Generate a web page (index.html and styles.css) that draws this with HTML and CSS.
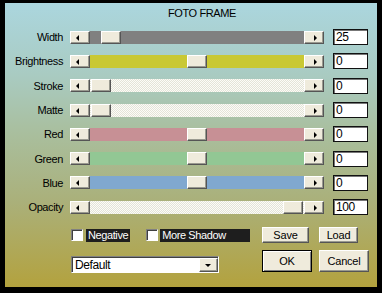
FILE: index.html
```html
<!DOCTYPE html>
<html lang="en">
<head>
    <meta charset="UTF-8">
    <title>Foto Frame</title>
    <link rel="stylesheet" href="styles.css">
</head>
<body>
    <div class="dialog">
        <div class="title">FOTO FRAME</div>

        <div class="sliders">
            <div class="name">Width</div>
            <div class="slider">
                <span class="arrow left"></span>
                <span class="track grey"><span class="thumb" style="left: 11px"></span></span>
                <span class="arrow right"></span>
            </div>
            <div class="value">25</div>

            <div class="name">Brightness</div>
            <div class="slider">
                <span class="arrow left"></span>
                <span class="track yellow"><span class="thumb" style="left: 97px"></span></span>
                <span class="arrow right"></span>
            </div>
            <div class="value">0</div>

            <div class="name">Stroke</div>
            <div class="slider">
                <span class="arrow left"></span>
                <span class="track dither"><span class="thumb" style="left: 1px"></span></span>
                <span class="arrow right"></span>
            </div>
            <div class="value">0</div>

            <div class="name">Matte</div>
            <div class="slider">
                <span class="arrow left"></span>
                <span class="track dither"><span class="thumb" style="left: 1px"></span></span>
                <span class="arrow right"></span>
            </div>
            <div class="value">0</div>

            <div class="name">Red</div>
            <div class="slider">
                <span class="arrow left"></span>
                <span class="track red"><span class="thumb" style="left: 97px"></span></span>
                <span class="arrow right"></span>
            </div>
            <div class="value">0</div>

            <div class="name">Green</div>
            <div class="slider">
                <span class="arrow left"></span>
                <span class="track green"><span class="thumb" style="left: 97px"></span></span>
                <span class="arrow right"></span>
            </div>
            <div class="value">0</div>

            <div class="name">Blue</div>
            <div class="slider">
                <span class="arrow left"></span>
                <span class="track blue"><span class="thumb" style="left: 97px"></span></span>
                <span class="arrow right"></span>
            </div>
            <div class="value">0</div>

            <div class="name">Opacity</div>
            <div class="slider">
                <span class="arrow left"></span>
                <span class="track dither"><span class="thumb" style="left: 193px"></span></span>
                <span class="arrow right"></span>
            </div>
            <div class="value">100</div>
        </div>

        <div class="bottom">
            <div class="checks">
                <span class="box"></span>
                <span class="check-label">Negative</span>
                <span class="box second"></span>
                <span class="check-label wide">More Shadow</span>
            </div>
            <button class="btn save">Save</button>
            <button class="btn load">Load</button>

            <div class="select">
                <span class="select-text">Default</span>
                <span class="select-btn"></span>
            </div>
            <button class="btn big default">OK</button>
            <button class="btn big">Cancel</button>
        </div>
    </div>
</body>
</html>
```

FILE: styles.css
```css
body {
    margin: 0;
    background-color: #000;
    font-family: 'Liberation Sans', Arial, sans-serif;
    font-size: 11px;
    letter-spacing: -0.4px;
    color: #000;
}
.dialog {
    margin: 3px 5px 0 5px;
    width: 372px;
    height: 284px;
    background: linear-gradient(#abd6de 0%, #a9cbc2 25%, #a9bf9f 45%, #aab07a 70%, #b3a23e 100%);
}
.title {
    height: 22px;
    line-height: 20px;
    padding-left: 163px;
}
.sliders {
    display: grid;
    grid-template-columns: 65px 254px 44px;
    grid-auto-rows: 24.3px;
    align-items: center;
}
.name {
    text-align: right;
    padding-right: 7px;
}
.slider {
    display: flex;
    height: 13px;
}
.arrow, .thumb, .btn, .select-btn {
    background-color: #efebdc;
    box-sizing: border-box;
    border: 1px solid;
    border-color: #fff #555 #555 #fff;
    box-shadow: inset -1px -1px #9a9a90;
}
.arrow {
    width: 20px;
    height: 13px;
    position: relative;
}
.arrow::after {
    content: '';
    position: absolute;
    top: 3px;
    border: 3px solid transparent;
}
.arrow.left::after {
    left: 5px;
    border-right: 3px solid #000;
    border-left-width: 0;
}
.arrow.right::after {
    left: 9px;
    border-left: 3px solid #000;
    border-right-width: 0;
}
.track {
    flex: 1;
    position: relative;
}
.thumb {
    position: absolute;
    top: 0;
    width: 20px;
    height: 13px;
}
.grey { background-color: #808080; }
.yellow { background-color: #c9c833; }
.red { background-color: #c79095; }
.green { background-color: #92c794; }
.blue { background-color: #80a8cf; }
.dither {
    background: repeating-conic-gradient(#fcfcf8 0 25%, #e4e4d8 0 50%) 0 0 / 2px 2px;
}
.value {
    margin-left: 9px;
    width: 35px;
    height: 16px;
    box-sizing: border-box;
    background-color: #fff;
    border: 1px solid #111;
    box-shadow: inset 1px 1px #777;
    padding-left: 2px;
    line-height: 14px;
    font-size: 12px;
}
.bottom {
    display: grid;
    grid-template-columns: 191px 57px 50px;
    grid-template-rows: 16px 23px;
    row-gap: 7px;
    margin-top: 8px;
    padding-left: 66px;
}
.checks {
    display: flex;
    align-items: center;
}
.box {
    width: 12px;
    height: 12px;
    box-sizing: border-box;
    background-color: #fff;
    border: 1px solid;
    border-color: #808080 #fff #fff #808080;
    box-shadow: inset 1px 1px #404040;
    margin-right: 3px;
}
.box.second {
    margin-left: 16px;
    margin-right: 2px;
}
.check-label {
    background-color: #1e1e1e;
    color: #fff;
    height: 13px;
    line-height: 13px;
    padding: 0 2px;
}
.check-label.wide {
    width: 86px;
}
.btn {
    font-family: inherit;
    font-size: 11px;
    letter-spacing: -0.2px;
    color: #000;
    padding: 0;
    height: 16px;
    line-height: 12px;
}
.save { width: 47px; }
.load { width: 39px; }
.big {
    width: 50px;
    height: 22px;
    line-height: 18px;
}
.btn.default {
    border-color: #000;
    box-shadow: inset 1px 1px #fff, inset -1px -1px #808080;
}
.select {
    align-self: end;
    width: 148px;
    height: 17px;
    box-sizing: border-box;
    display: flex;
    align-items: center;
    background-color: #fff;
    border: 1px solid;
    border-color: #808080 #fff #fff #808080;
    box-shadow: inset 1px 1px #404040;
    padding: 1px 0 0 3px;
}
.select-text {
    flex: 1;
    font-size: 12px;
}
.select-btn {
    width: 19px;
    height: 14px;
    position: relative;
}
.select-btn::after {
    content: '';
    position: absolute;
    left: 5px;
    top: 5px;
    border: 3px solid transparent;
    border-top: 3px solid #000;
    border-bottom-width: 0;
}
```
